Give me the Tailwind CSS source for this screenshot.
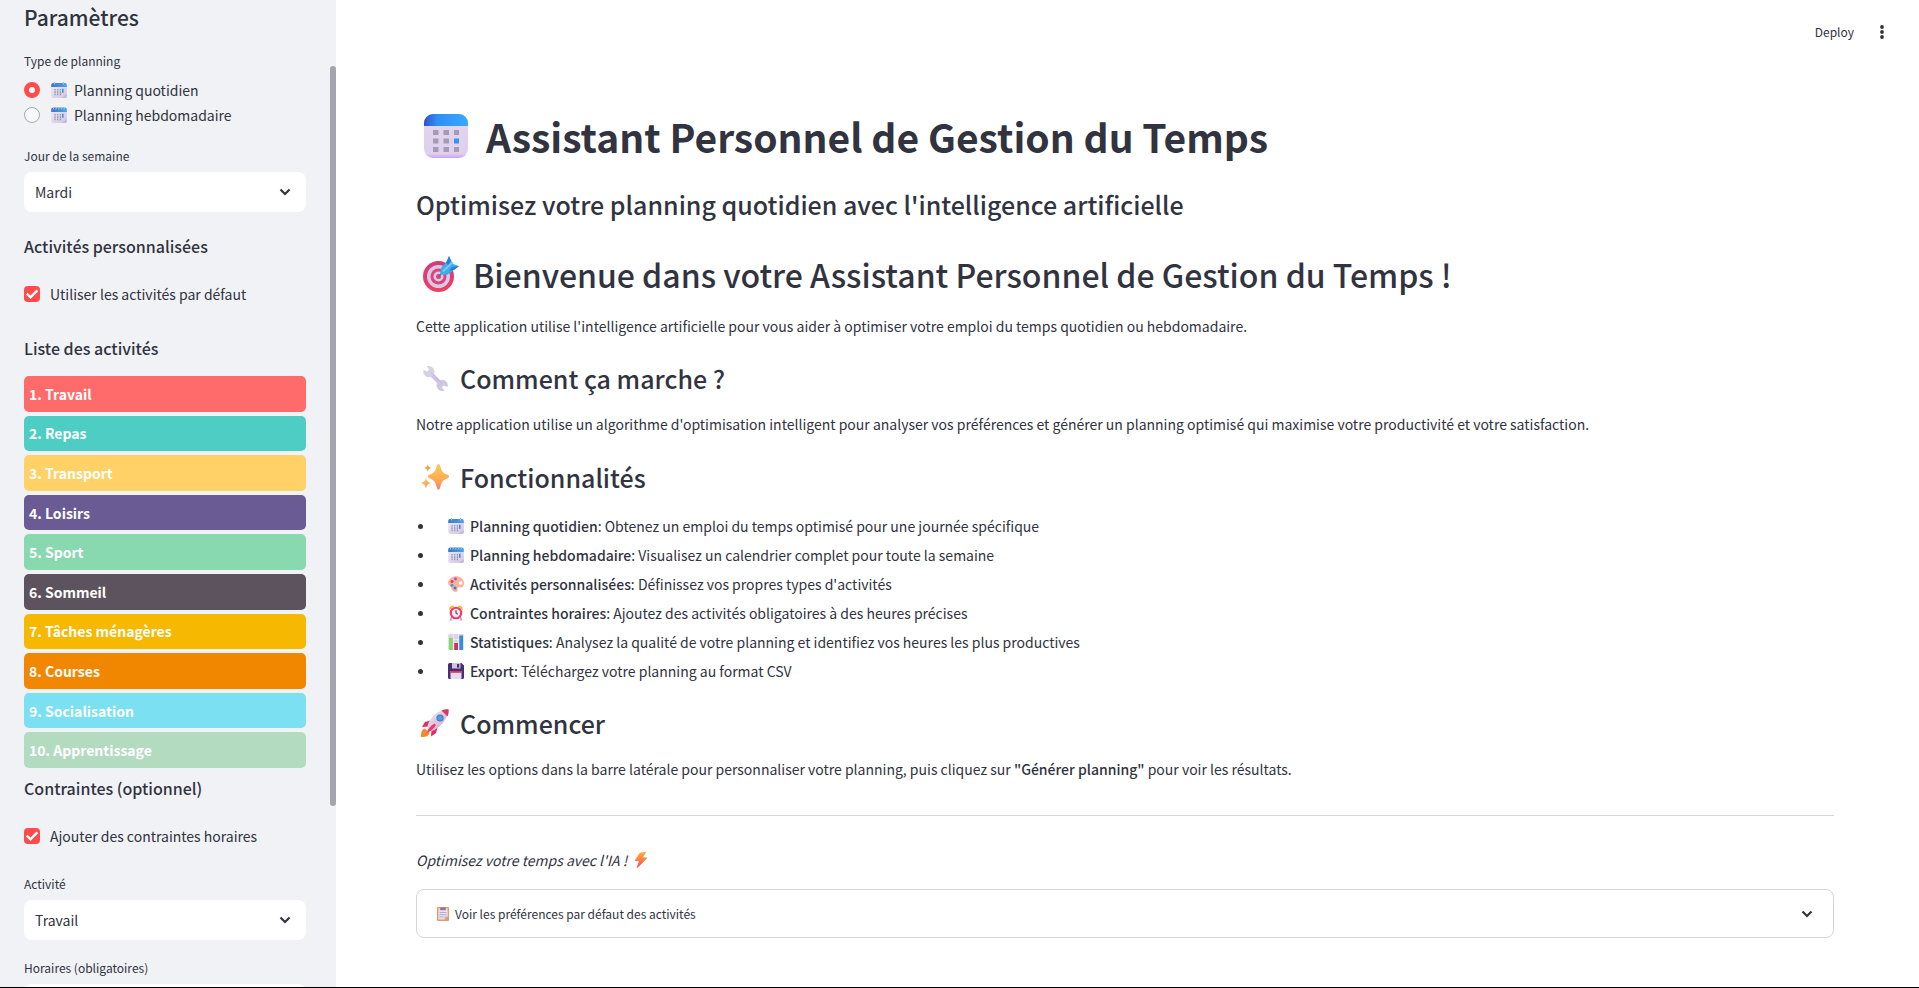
<!DOCTYPE html>
<html lang="fr">
<head>
<meta charset="utf-8">
<title>Assistant Personnel de Gestion du Temps</title>
<script src="https://cdn.jsdelivr.net/npm/@tailwindcss/browser@4"></script>
</head>
<body class="flex h-screen overflow-hidden border-b border-black bg-white font-['Noto_Sans_CJK_SC','Noto_Sans',sans-serif] text-sm/[26px] text-[#31333f]">

<!-- Shared symbols -->
<svg class="absolute size-0" aria-hidden="true">
  <defs>
    <linearGradient id="gBlue" x1="0" y1="0" x2="1" y2="0"><stop offset="0" stop-color="#3350c8"/><stop offset=".3" stop-color="#2f8ff5"/><stop offset="1" stop-color="#37a9ff"/></linearGradient>
    <linearGradient id="gSky" x1="0" y1="0" x2="1" y2="0"><stop offset="0" stop-color="#3a78c6"/><stop offset="1" stop-color="#4aa5ea"/></linearGradient>
    <linearGradient id="gPage" x1="0" y1="0" x2="0" y2="1"><stop offset="0" stop-color="#e2d6ec"/><stop offset=".9" stop-color="#dfd0ee"/><stop offset="1" stop-color="#cf9ff5"/></linearGradient>
    <linearGradient id="gPaper" x1="0" y1="0" x2="1" y2="1"><stop offset="0" stop-color="#ecebf3"/><stop offset="1" stop-color="#d2c4e2"/></linearGradient>
    <linearGradient id="gStar" x1="0" y1="0" x2="0" y2="1"><stop offset="0" stop-color="#fdc950"/><stop offset=".55" stop-color="#fdaf55"/><stop offset="1" stop-color="#fb7f6e"/></linearGradient>
    <linearGradient id="gBolt" x1="0" y1="0" x2="0" y2="1"><stop offset="0" stop-color="#fbb13c"/><stop offset=".5" stop-color="#fa7f45"/><stop offset="1" stop-color="#f2435e"/></linearGradient>
    <linearGradient id="gRed" x1="0" y1="0" x2="0" y2="1"><stop offset="0" stop-color="#d23a7c"/><stop offset="1" stop-color="#ee4163"/></linearGradient>
    <linearGradient id="gBody" x1="0" y1="0" x2="1" y2="1"><stop offset="0" stop-color="#eee9f2"/><stop offset="1" stop-color="#c9a9cf"/></linearGradient>
  </defs>
  <symbol id="calendar" viewBox="0 0 44 44">
    <rect width="44" height="44" rx="9" fill="url(#gPage)"/>
    <path d="M0 12V9a9 9 0 0 1 9-9h26a9 9 0 0 1 9 9v3z" fill="url(#gBlue)"/>
    <path d="M9 16h5.500v5H9zM19.500 16H25v5h-5.500zM30 16h5v5h-5zM9 24.500h5.500v5H9zM19.500 24.500H25v5h-5.500zM9 33h5.500v5H9zM19.500 33H25v5h-5.500zM30 33h5v5h-5z" fill="#a79bb4"/>
    <path d="M30 24.500h5v5h-5z" fill="#3096f3"/>
  </symbol>
  <symbol id="daily" viewBox="0 0 16 16">
    <rect x=".2" y="1" width="15.600" height="15" rx="2" fill="url(#gPaper)"/>
    <path d="M.2 5V3a2 2 0 0 1 2-2h11.600a2 2 0 0 1 2 2v2z" fill="url(#gSky)"/>
    <path d="M3.500 0v2.500M12.500 0v2.500" stroke="#a9bdd8" stroke-width="1.200"/>
    <path d="M4 7v6.500M6.700 7v6.500M9.400 7v6.500" stroke="#8d93b0" stroke-width="1.200" stroke-dasharray="1.600 .7"/>
    <path d="M11.800 6.800v4" stroke="#2f86dc" stroke-width="1.400"/>
    <path d="M15.800 12v2a2 2 0 0 1-2 2H11z" fill="#c9b5dc"/>
  </symbol>
  <symbol id="weekly" viewBox="0 0 16 16">
    <rect x=".2" y=".6" width="15.600" height="15.400" rx="2" fill="url(#gPaper)"/>
    <path d="M.2 5V2.600a2 2 0 0 1 2-2h11.600a2 2 0 0 1 2 2V5z" fill="url(#gSky)"/>
    <path d="M2 2.500 3.200 0M4.700 2.500 5.900 0M7.400 2.500 8.600 0M10.100 2.500 11.300 0M12.800 2.500 14 0" stroke="#b7c9de" stroke-width=".9"/>
    <path d="M4 7v6.500M6.700 7v6.500M9.400 7v6.500" stroke="#8d93b0" stroke-width="1.200" stroke-dasharray="1.600 .7"/>
    <path d="M11.800 6.800v4" stroke="#2f86dc" stroke-width="1.400"/>
    <path d="M15.800 12v2a2 2 0 0 1-2 2H11z" fill="#c9b5dc"/>
  </symbol>
  <symbol id="target" viewBox="0 0 36 36">
    <circle cx="15.500" cy="20.500" r="15.500" fill="url(#gRed)"/>
    <circle cx="15.500" cy="20.500" r="11.500" fill="#d6cbe4"/>
    <circle cx="15.500" cy="20.500" r="8" fill="#e3417a"/>
    <circle cx="15.500" cy="20.500" r="5" fill="#d6cbe4"/>
    <circle cx="15.500" cy="20.500" r="2.500" fill="#e3417a"/>
    <path d="M15.500 20.500 20 16" stroke="#7b5b83" stroke-width="1.500"/>
    <path d="M17 18.500 18 12l6-7 2-5 3 6 1 2 6 2-5 4-7 5z" fill="#3dabee"/>
    <path d="M23 7l3-7 2 5-2 5zM29 11l7-1-5 4-5 1z" fill="#2b7de0"/>
    <path d="M20 15.500 29.500 6" stroke="#6fcdf8" stroke-width="2"/>
  </symbol>
  <symbol id="wrench" viewBox="0 0 25 25">
    <path d="m7 7 11 11" stroke="#d0c3e6" stroke-width="4.200"/>
    <path d="M3.500.6A5.600 5.600 0 1 1 .5 4l3.700 1.600 2-2z" fill="#d8d1e2"/>
    <path d="M21.500 24.400a5.600 5.600 0 1 1 3-3.400l-3.700-1.600-2 2z" fill="#d0c8dc"/>
    <path d="m8 6.500 10.500 10.500" stroke="#c5b4e4" stroke-width="1"/>
  </symbol>
  <symbol id="sparkles" viewBox="0 0 28 26">
    <g fill="url(#gStar)">
      <path d="M17.500 0c.8 0 1.300.8 1.700 2 1.200 4.800 2.200 6.800 7 8.600 1 .4 1.800.9 1.800 1.900s-.8 1.500-1.800 1.900c-4.800 1.800-5.800 4-7 9-.4 1.200-.9 2.100-1.700 2.100s-1.300-.9-1.700-2.100c-1.200-5-2.200-7.200-7-9-1-.4-1.800-.9-1.800-1.900s.8-1.500 1.800-1.900c4.800-1.800 5.800-3.800 7-8.600.4-1.200.9-2 1.700-2z"/>
      <path d="M5 13.800c.9 3.400 1.400 3.900 5 5.200-3.600 1.300-4.100 1.800-5 5.400-.9-3.600-1.400-4.100-5-5.400 3.600-1.300 4.100-1.800 5-5.200z"/>
    </g>
    <path d="M6.800 0c.7 2.700 1.100 3.100 3.700 4-2.600.9-3 1.300-3.700 4-.7-2.700-1.100-3.100-3.700-4 2.600-.9 3-1.300 3.700-4z" fill="#f0a341"/>
  </symbol>
  <symbol id="rocket" viewBox="0 0 28 28">
    <path d="M0 28c-.5-4 1-8 4-8.500l4.500 4.500C8 27 4 28.500 0 28z" fill="#f58a2c"/>
    <path d="M9.500 11.500 4 13l-3 5 6.500-.5zM16.500 18.500 15 24l-5 3.500.5-7z" fill="#e42a5f"/>
    <path d="M7.500 21.500C5 19 7 12.500 12 7.500 17 2.500 23 0 27 .3c.8 3.700-1.500 10.200-6.500 15.200s-11 8.500-13 6z" fill="url(#gBody)"/>
    <path d="M20.500 1.500C23 .4 25.500 0 27.500.3c.5 2 0 4.700-1 7.200z" fill="#d93761"/>
    <circle cx="19" cy="9" r="3.600" fill="#5a6fa8"/><circle cx="19" cy="9" r="2.600" fill="#3fa3ec"/>
    <path d="M13.500 14.500c-3 1.500-6.500 5-8 9.500 4.500-1.500 8-5 9.500-8z" fill="#ef3b6b"/>
  </symbol>
  <symbol id="palette" viewBox="0 0 16 16">
    <path d="M8 .2C12.500.2 16 2.800 16 7c0 2.500-1 4.500-3 4.500-1.500 0-2.500-.5-3.300.3-1 1 .6 2.200-.4 3.500-1.300 1.600-4.800.2-5.500-1.600C3 12 3.500 11 1.700 9.800-1 8 0 5 1.600 3.300 3 1.400 5 .2 8 .2z" fill="#fdb49d"/>
    <circle cx="12.700" cy="7" r="1.700" fill="#fff"/>
    <circle cx="4" cy="5.500" r="1.600" fill="#e9365d"/><circle cx="7.500" cy="3" r="1.400" fill="#a550d8"/><circle cx="4" cy="9.300" r="1.500" fill="#21aeb3"/><circle cx="7" cy="12" r="1.500" fill="#3b78e0"/>
  </symbol>
  <symbol id="alarm" viewBox="0 0 16 16">
    <path d="M1.500 5.200C.6 2 3 .2 6.500 1zM14.500 5.200C15.400 2 13 .2 9.500 1z" fill="#f5b631"/>
    <path d="m4 12-1.800 3.600M12 12l1.800 3.600" stroke="#d5a9c4" stroke-width="2"/>
    <circle cx="8" cy="8" r="6.300" fill="#ef3c69"/><circle cx="8" cy="8" r="4.200" fill="#f3e8f3"/>
    <path d="M8 5.300V8l1.800 1.300" fill="none" stroke="#5c4468" stroke-width="1.200"/>
  </symbol>
  <symbol id="chart" viewBox="0 0 16 16">
    <rect x=".2" width="15.600" height="16" rx="1.500" fill="#ddd3e3"/>
    <path d="M0 5.500h16M0 10.500h16M5.500 0v16M10.500 0v16" stroke="#f3eff5" stroke-width=".7"/>
    <path d="M1 4h3.800v12H1z" fill="#7fd96b"/><path d="M6.200 9H10v7H6.200z" fill="#d52d64"/><path d="M11.300 1.500H15V16h-3.700z" fill="#2f8fdc"/>
  </symbol>
  <symbol id="floppy" viewBox="0 0 16 16">
    <path d="M1.500 0h12L16 2.500V14.500a1.500 1.500 0 0 1-1.500 1.500h-13A1.500 1.500 0 0 1 0 14.500v-13A1.500 1.500 0 0 1 1.500 0z" fill="#46306f"/>
    <path d="M4 0h8.500v5.500H4z" fill="#cdc6dd"/><path d="M9 1h2.200v3.600H9z" fill="#46306f"/>
    <path d="M2.500 8h11v8h-11z" fill="#e4dbef"/><path d="M2.500 8h11v1.800h-11z" fill="#dc3858"/>
  </symbol>
  <symbol id="bolt" viewBox="0 0 12 16">
    <path d="M5.500.4 10.500 0c.5 0 .7.400.4.800L8 5.300l3.500.2c.5 0 .7.600.3 1L2.600 15.700c-.5.400-1 0-.8-.5L4 9.300.5 9c-.5 0-.6-.5-.4-.9L4.600 1c.2-.4.500-.6.900-.6z" fill="url(#gBolt)"/>
  </symbol>
  <symbol id="clipboard" viewBox="0 0 12 14">
    <rect width="12" height="14" rx="1" fill="#dd9c6b"/>
    <path d="M1.300 1.300h9.400v8.200l-3 3H1.300z" fill="#e8dfee"/><path d="M10.700 9.500h-3v3z" fill="#c9a7c0"/>
    <path d="M3.200.5h5.600v2.700H3.200z" fill="#8f7793"/>
    <path d="M2.500 5.500h7M2.500 7.700h7M2.500 9.900h4" stroke="#b3a5c4" stroke-width=".9"/>
  </symbol>
  <symbol id="chevron" viewBox="0 0 12 8">
    <path d="M1.500 1.500 6 6l4.500-4.500" fill="none" stroke="#31333f" stroke-width="2.200"/>
  </symbol>
  <symbol id="tick" viewBox="0 0 16 16">
    <path d="m2.800 7.600 3.700 3.700L13.400 4.400" fill="none" stroke="#fff" stroke-width="2.400"/>
  </symbol>
</svg>

<aside class="relative w-84 shrink-0 overflow-hidden bg-[#f0f2f6] pl-6 pr-[30px] pt-[2px]">
  <h2 class="text-[21px]/[30px] font-medium">Paramètres</h2>

  <fieldset class="mt-[19px]">
    <legend class="text-xs/5">Type de planning</legend>
    <label class="mt-[6px] flex h-[25px] items-center">
      <input type="radio" name="planning" checked class="size-4 appearance-none rounded-full border-[5px] border-[#ff4b4b] bg-white">
      <svg class="ml-[11px] size-4"><use href="#daily"/></svg>
      <span class="ml-[7px]">Planning quotidien</span>
    </label>
    <label class="flex h-[25px] items-center">
      <input type="radio" name="planning" class="size-4 appearance-none rounded-full border border-[#a8a9b0] bg-[#f9f9fb]">
      <svg class="ml-[11px] size-4"><use href="#weekly"/></svg>
      <span class="ml-[7px]">Planning hebdomadaire</span>
    </label>
  </fieldset>

  <label for="jour" class="mt-[19px] block text-xs/5">Jour de la semaine</label>
  <div class="mt-[6px] grid items-center">
    <select id="jour" class="col-start-1 row-start-1 h-10 w-full appearance-none rounded-lg bg-white pl-[11px]"><option>Mardi</option></select>
    <svg class="pointer-events-none col-start-1 row-start-1 mr-[15px] h-2 w-3 justify-self-end"><use href="#chevron"/></svg>
  </div>

  <h3 class="mt-[22px] text-base/6 font-medium">Activités personnalisées</h3>
  <label class="mt-[23px] flex items-center gap-[10px]">
    <span class="grid">
      <input type="checkbox" checked class="col-start-1 row-start-1 size-4 appearance-none rounded-sm bg-[#ff4b4b]">
      <svg class="pointer-events-none col-start-1 row-start-1 size-4"><use href="#tick"/></svg>
    </span>
    Utiliser les activités par défaut
  </label>

  <h3 class="mt-[29px] text-base/6 font-medium">Liste des activités</h3>
  <ol class="mt-4 flex h-[392px] flex-col gap-1 font-bold text-white *:flex *:flex-1 *:items-center *:rounded-[5px] *:pl-[5px]">
    <li class="bg-[#ff6b6b]">1. Travail</li>
    <li class="bg-[#4ecdc4]">2. Repas</li>
    <li class="bg-[#ffd166]">3. Transport</li>
    <li class="bg-[#6a5b95]">4. Loisirs</li>
    <li class="bg-[#88d8b0]">5. Sport</li>
    <li class="bg-[#5d535e]">6. Sommeil</li>
    <li class="bg-[#f7b801]">7. Tâches ménagères</li>
    <li class="bg-[#f18701]">8. Courses</li>
    <li class="bg-[#7ae0f2]">9. Socialisation</li>
    <li class="bg-[#b3dbc0]">10. Apprentissage</li>
  </ol>

  <h3 class="mt-2 text-base/6 font-medium">Contraintes (optionnel)</h3>
  <label class="mt-[23px] flex items-center gap-[10px]">
    <span class="grid">
      <input type="checkbox" checked class="col-start-1 row-start-1 size-4 appearance-none rounded-sm bg-[#ff4b4b]">
      <svg class="pointer-events-none col-start-1 row-start-1 size-4"><use href="#tick"/></svg>
    </span>
    Ajouter des contraintes horaires
  </label>

  <label for="activite" class="mt-[25px] block text-xs/5">Activité</label>
  <div class="mt-[6px] grid items-center">
    <select id="activite" class="col-start-1 row-start-1 h-10 w-full appearance-none rounded-lg bg-white pl-[11px]"><option>Travail</option></select>
    <svg class="pointer-events-none col-start-1 row-start-1 mr-[15px] h-2 w-3 justify-self-end"><use href="#chevron"/></svg>
  </div>

  <label for="horaires" class="mt-[18px] block text-xs/5">Horaires (obligatoires)</label>
  <input id="horaires" type="text" class="mt-[6px] block h-10 w-full rounded-lg bg-white px-3">

  <!-- Scrollbar thumb -->
  <div class="absolute right-0 top-[66px] h-[740px] w-[6px] rounded-full bg-[#a3a4ae]"></div>
</aside>

<div class="relative flex-1">
  <header class="absolute right-[31px] top-[18px] flex items-center gap-[22px]">
    <button type="button" class="text-xs/7">Deploy</button>
    <button type="button" aria-label="Menu" class="grid h-7 w-3 place-items-center">
      <svg class="h-4 w-1" viewBox="0 0 4 16" fill="#31333f"><circle cx="2" cy="3" r="1.900"/><circle cx="2" cy="8" r="1.900"/><circle cx="2" cy="13" r="1.900"/></svg>
    </button>
  </header>

  <main class="pl-20 pr-[85px] pt-[110px]">
    <h1 class="flex items-center text-[39px]/[52px] font-bold"><svg class="ml-2 mr-[18px] size-11"><use href="#calendar"/></svg>Assistant Personnel de Gestion du Temps</h1>
    <h3 class="mt-[25px] text-[25px]/[34px] font-medium">Optimisez votre planning quotidien avec l'intelligence artificielle</h3>
    <h2 class="mt-[31px] flex items-center text-[32px]/[44px] font-medium"><svg class="ml-[7px] mr-[14px] size-9"><use href="#target"/></svg>Bienvenue dans votre Assistant Personnel de Gestion du Temps !</h2>
    <p class="mt-[17px]">Cette application utilise l'intelligence artificielle pour vous aider à optimiser votre emploi du temps quotidien ou hebdomadaire.</p>

    <h3 class="mt-[22px] flex items-center text-[25px]/[34px] font-medium"><svg class="ml-[7px] mr-3 size-[25px]"><use href="#wrench"/></svg>Comment ça marche ?</h3>
    <p class="mt-4">Notre application utilise un algorithme d'optimisation intelligent pour analyser vos préférences et générer un planning optimisé qui maximise votre productivité et votre satisfaction.</p>

    <h3 class="mt-[23px] flex items-center text-[25px]/[34px] font-medium"><svg class="ml-[5px] mr-[11px] h-[26px] w-7"><use href="#sparkles"/></svg>Fonctionnalités</h3>
    <ul class="mt-[19px] flex flex-col gap-[3px] *:flex *:items-center">
      <li><span class="ml-[2px] mr-[25px] size-[5px] rounded-full bg-[#31333f]"></span><svg class="mr-[6px] size-4"><use href="#daily"/></svg><p><strong class="font-medium">Planning quotidien</strong>: Obtenez un emploi du temps optimisé pour une journée spécifique</p></li>
      <li><span class="ml-[2px] mr-[25px] size-[5px] rounded-full bg-[#31333f]"></span><svg class="mr-[6px] size-4"><use href="#weekly"/></svg><p><strong class="font-medium">Planning hebdomadaire</strong>: Visualisez un calendrier complet pour toute la semaine</p></li>
      <li><span class="ml-[2px] mr-[25px] size-[5px] rounded-full bg-[#31333f]"></span><svg class="mr-[6px] size-4"><use href="#palette"/></svg><p><strong class="font-medium">Activités personnalisées</strong>: Définissez vos propres types d'activités</p></li>
      <li><span class="ml-[2px] mr-[25px] size-[5px] rounded-full bg-[#31333f]"></span><svg class="mr-[6px] size-4"><use href="#alarm"/></svg><p><strong class="font-medium">Contraintes horaires</strong>: Ajoutez des activités obligatoires à des heures précises</p></li>
      <li><span class="ml-[2px] mr-[25px] size-[5px] rounded-full bg-[#31333f]"></span><svg class="mr-[6px] size-4"><use href="#chart"/></svg><p><strong class="font-medium">Statistiques</strong>: Analysez la qualité de votre planning et identifiez vos heures les plus productives</p></li>
      <li><span class="ml-[2px] mr-[25px] size-[5px] rounded-full bg-[#31333f]"></span><svg class="mr-[6px] size-4"><use href="#floppy"/></svg><p><strong class="font-medium">Export</strong>: Téléchargez votre planning au format CSV</p></li>
    </ul>

    <h3 class="mt-[22px] flex items-center text-[25px]/[34px] font-medium"><svg class="ml-[5px] mr-[11px] size-7"><use href="#rocket"/></svg>Commencer</h3>
    <p class="mt-4">Utilisez les options dans la barre latérale pour personnaliser votre planning, puis cliquez sur <strong class="font-medium">"Générer planning"</strong> pour voir les résultats.</p>

    <hr class="mt-[33px] border-[#d6d6d9]">
    <p class="mt-[31px] flex items-center italic">Optimisez votre temps avec l'IA !<svg class="ml-2 h-4 w-3"><use href="#bolt"/></svg></p>

    <button type="button" aria-expanded="false" class="mt-4 flex h-[49px] w-full items-center rounded-lg border border-[#d6d6d9] px-5 text-xs/5">
      <svg class="mr-[6px] h-[14px] w-3"><use href="#clipboard"/></svg>
      Voir les préférences par défaut des activités
      <svg class="ml-auto h-2 w-3"><use href="#chevron"/></svg>
    </button>
  </main>
</div>
</body>
</html>
